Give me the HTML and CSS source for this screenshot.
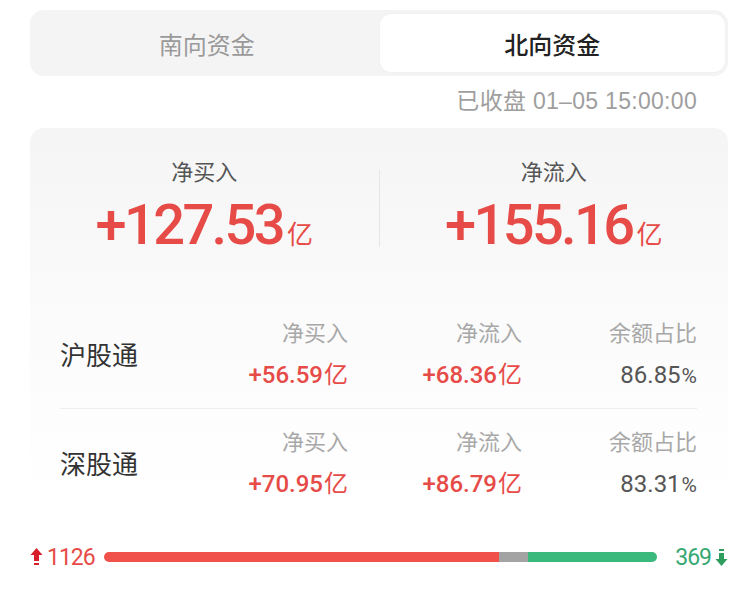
FILE: index.html
```html
<!DOCTYPE html>
<html lang="zh-CN">
  <head>
    <meta charset="UTF-8" />
    <meta name="viewport" content="width=device-width, initial-scale=1.0" />
    <title>北向资金</title>
    <link rel="stylesheet" href="styles.css">
  </head>
  <body>
    <div class="page">
      <div class="tabs">
        <div class="tab">南向资金</div>
        <div class="tab active">北向资金</div>
      </div>

      <p class="status">已收盘 01–05 15:00:00</p>

      <div class="card">
        <div class="summary">
          <div class="summary-item">
            <p class="summary-label">净买入</p>
            <p class="summary-value">+127.53<span class="unit">亿</span></p>
          </div>
          <div class="summary-divider"></div>
          <div class="summary-item">
            <p class="summary-label">净流入</p>
            <p class="summary-value">+155.16<span class="unit">亿</span></p>
          </div>
        </div>

        <div class="row">
          <div class="row-name">沪股通</div>
          <div class="cell">
            <p class="cell-label">净买入</p>
            <p class="cell-value up">+56.59<span class="cell-unit">亿</span></p>
          </div>
          <div class="cell">
            <p class="cell-label">净流入</p>
            <p class="cell-value up">+68.36<span class="cell-unit">亿</span></p>
          </div>
          <div class="cell">
            <p class="cell-label">余额占比</p>
            <p class="cell-value">86.85<span class="pct">%</span></p>
          </div>
        </div>

        <div class="row">
          <div class="row-name">深股通</div>
          <div class="cell">
            <p class="cell-label">净买入</p>
            <p class="cell-value up">+70.95<span class="cell-unit">亿</span></p>
          </div>
          <div class="cell">
            <p class="cell-label">净流入</p>
            <p class="cell-value up">+86.79<span class="cell-unit">亿</span></p>
          </div>
          <div class="cell">
            <p class="cell-label">余额占比</p>
            <p class="cell-value">83.31<span class="pct">%</span></p>
          </div>
        </div>
      </div>

      <div class="breadth">
        <svg class="arrow" width="13" height="20" viewBox="0 0 13 20">
          <path d="M6.5 1 L12.5 8 L9 8 L9 14 L4 14 L4 8 L0.5 8 Z" fill="#d71f2b" />
          <rect x="4" y="16" width="5" height="2" fill="#d71f2b" />
        </svg>
        <span class="count up">1126</span>
        <div class="bar">
          <div class="bar-red" style="flex-grow: 1126"></div>
          <div class="bar-gray" style="flex-grow: 80"></div>
          <div class="bar-green" style="flex-grow: 369"></div>
        </div>
        <span class="count down">369</span>
        <svg class="arrow" width="13" height="20" viewBox="0 0 13 20">
          <rect x="4" y="2" width="5" height="2" fill="#2f9d5e" />
          <path d="M6.5 19 L12.5 12 L9 12 L9 6 L4 6 L4 12 L0.5 12 Z" fill="#2f9d5e" />
        </svg>
      </div>
    </div>
  </body>
</html>
```

FILE: styles.css
```css
* {
  padding: 0;
  margin: 0;
  box-sizing: border-box;
}

body {
  background-color: #fff;
  font-family: "Noto Sans CJK SC", sans-serif;
  color: #333;
}

.page {
  width: 750px;
  padding: 10px 22px 0 30px;
}

.tabs {
  display: grid;
  grid-template-columns: 1fr 1fr;
  height: 66px;
  padding: 4px 3px 4px 4px;
  background-color: #f4f4f4;
  border-radius: 14px;
}

.tab {
  display: flex;
  justify-content: center;
  align-items: center;
  font-size: 24px;
  color: #9a9a9a;
  border-radius: 11px;
}

.tab.active {
  background-color: #fff;
  color: #222;
  font-weight: 500;
  box-shadow: 0 0 2px rgba(0, 0, 0, 0.06);
}

.status {
  margin-top: 11px;
  padding-right: 31px;
  text-align: right;
  font-family: "Liberation Sans", "Noto Sans CJK SC", sans-serif;
  font-size: 23px;
  line-height: 28px;
  letter-spacing: 0.3px;
  color: #9e9e9e;
}

.card {
  margin-top: 13px;
  border-radius: 14px;
  background: linear-gradient(#f5f5f5, #fdfdfd 70%, #fff);
}

.summary {
  display: grid;
  grid-template-columns: 1fr 1px 1fr;
  padding: 27px 0 45px;
}

.summary-item {
  display: flex;
  flex-direction: column;
  align-items: center;
  gap: 10px;
}

.summary-label {
  font-size: 22px;
  line-height: 30px;
  color: #555;
}

.summary-value {
  font-family: Roboto, sans-serif;
  font-weight: 500;
  font-size: 56px;
  line-height: 60px;
  letter-spacing: -2.6px;
  color: #e64b47;
}

.unit {
  font-family: "Noto Sans CJK SC", sans-serif;
  font-weight: 400;
  font-size: 26px;
  line-height: 1;
  letter-spacing: 0;
  margin-left: 4px;
}

.summary-divider {
  background-color: #e6e6e6;
  margin: 15px 0 8px;
}

.row {
  display: grid;
  grid-template-columns: 1fr 174px 174px 175px;
  margin: 0 31px 0 30px;
  padding: 16px 0 17px;
  border-bottom: 1px solid #eee;
}

.row:last-child {
  border-bottom: none;
}

.row-name {
  align-self: center;
  font-size: 26px;
  color: #333;
}

.cell {
  display: flex;
  flex-direction: column;
  align-items: flex-end;
  gap: 13px;
}

.cell-label {
  font-size: 22px;
  line-height: 30px;
  color: #a8a8a8;
}

.cell-value {
  font-family: Roboto, sans-serif;
  font-size: 24px;
  line-height: 32px;
  color: #555;
}

.cell-value.up {
  font-weight: 500;
  color: #e64b47;
}

.cell-unit {
  font-family: "Noto Sans CJK SC", sans-serif;
  font-weight: 400;
  line-height: 1;
  margin-left: 1px;
}

.pct {
  font-size: 21px;
  line-height: 1;
  margin-left: 1px;
}

.breadth {
  display: flex;
  align-items: center;
  height: 30px;
  margin-top: 25px;
}

.arrow {
  flex-shrink: 0;
}

.count {
  font-family: Roboto, sans-serif;
  font-size: 23px;
  letter-spacing: -1px;
}

.count.up {
  color: #e64b47;
  margin: 0 9px 0 4px;
}

.count.down {
  color: #36a874;
  margin: 0 4px 0 18px;
}

.bar {
  display: flex;
  flex: 1;
  height: 10px;
  border-radius: 5px;
  overflow: hidden;
}

.bar-red {
  background-color: #f0514b;
}

.bar-gray {
  background-color: #a3a3a3;
}

.bar-green {
  background-color: #3bb87c;
}
```
